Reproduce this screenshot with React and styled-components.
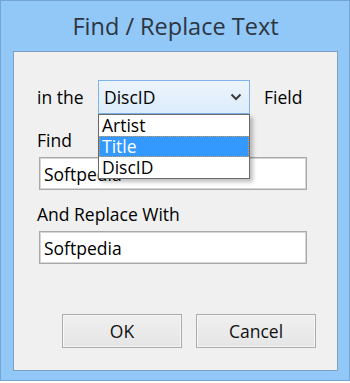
import React from 'react';
import styled, { createGlobalStyle } from 'styled-components';

const Global = createGlobalStyle`
  html, body { margin: 0; padding: 0; background: #ffffff; }
  body { font-family: "Open Sans", "Liberation Sans", sans-serif; }
`;

const options = ['Artist', 'Title', 'DiscID'];

const App = () => {
  return (
    <>
      <Global />
      <Window>
        <TitleBar>Find / Replace Text</TitleBar>
        <Client>
          <FieldRow>
            <Label>in the</Label>
            <Combo>
              <ComboValue>DiscID</ComboValue>
              <Chevron viewBox="0 0 12 8">
                <path d="M1.5 1.5 L6 6 L10.5 1.5" fill="none" stroke="#3c3c3c" strokeWidth="2" />
              </Chevron>
              <DropList>
                {options.map((o) => (
                  <DropItem key={o} selected={o === 'Title'}>{o}</DropItem>
                ))}
              </DropList>
            </Combo>
            <Label>Field</Label>
          </FieldRow>

          <Group>
            <Label>Find</Label>
            <TextBox defaultValue="Softpedia" />
          </Group>
          <Group $top={13}>
            <Label>And Replace With</Label>
            <TextBox defaultValue="Softpedia" />
          </Group>

          <Buttons>
            <Button>OK</Button>
            <Button>Cancel</Button>
          </Buttons>
        </Client>
      </Window>
    </>
  );
};
export default App;

const Window = styled.div`
  box-sizing: border-box;
  width: 350px;
  height: 381px;
  background: #91c8f7;
  border: 1px solid #74a4d4;
  padding: 0 11px 9px 12px;
  display: flex;
  flex-direction: column;
`;

const TitleBar = styled.div`
  height: 49px;
  display: flex;
  align-items: center;
  justify-content: center;
  font-size: 23.5px;
  color: #2e3540;
  padding-bottom: 1px;
`;

const Client = styled.div`
  flex: 1;
  background: #f0f0f0;
  border: 1px solid #7d9fc2;
  display: flex;
  flex-direction: column;
  padding: 28px 0 0 23px;
`;

const Label = styled.span`
  font-size: 17.5px;
  color: #000;
  line-height: 22px;
`;

const FieldRow = styled.div`
  display: flex;
  align-items: center;
  height: 34px;
  & > ${Label}:first-child { width: 61px; }
  & > ${Label}:last-child { margin-left: 14px; }
`;

const Combo = styled.div`
  position: relative;
  box-sizing: border-box;
  width: 152px;
  height: 34px;
  border: 1px solid #7eb4ea;
  background: linear-gradient(#ecf4fc, #dcecfc);
  display: flex;
  align-items: center;
  padding: 0 7px 0 5px;
`;

const ComboValue = styled.span`
  flex: 1;
  font-size: 17.5px;
  color: #000;
`;

const Chevron = styled.svg`
  width: 12px;
  height: 8px;
`;

const DropList = styled.div`
  position: absolute;
  left: -1px;
  top: 33px;
  width: 152px;
  box-sizing: border-box;
  background: #fff;
  border: 1px solid #6a6a6a;
  box-shadow: 3px 3px 4px rgba(0, 0, 0, 0.25);
  z-index: 2;
`;

const DropItem = styled.div`
  box-sizing: border-box;
  height: 21px;
  line-height: 19px;
  font-size: 17.5px;
  padding: 0 2px;
  color: ${(p) => (p.selected ? '#fff' : '#000')};
  background: ${(p) => (p.selected ? '#3399ff' : 'transparent')};
  border: 1px dotted ${(p) => (p.selected ? '#d49a5a' : 'transparent')};
`;

const Group = styled.div`
  display: flex;
  flex-direction: column;
  margin-top: ${(p) => p.$top || 15}px;
  gap: 6px;
`;

const TextBox = styled.input`
  box-sizing: border-box;
  width: 268px;
  height: 33px;
  margin-left: 2px;
  border: 1px solid #a9a9a9;
  box-shadow: inset 0 0 0 1px #d6d6d6;
  background: #fff;
  font-family: inherit;
  font-size: 17.5px;
  color: #000;
  padding: 0 4px;
  outline: none;
`;

const Buttons = styled.div`
  display: flex;
  gap: 14px;
  margin-top: 50px;
  padding-left: 25px;
`;

const Button = styled.button`
  box-sizing: border-box;
  width: 120px;
  height: 34px;
  border: 1px solid #acacac;
  box-shadow: inset 0 0 0 1px #f6f6f6;
  background: linear-gradient(#f0f0f0, #e5e5e5);
  font-family: inherit;
  font-size: 17.5px;
  color: #111;
`;
